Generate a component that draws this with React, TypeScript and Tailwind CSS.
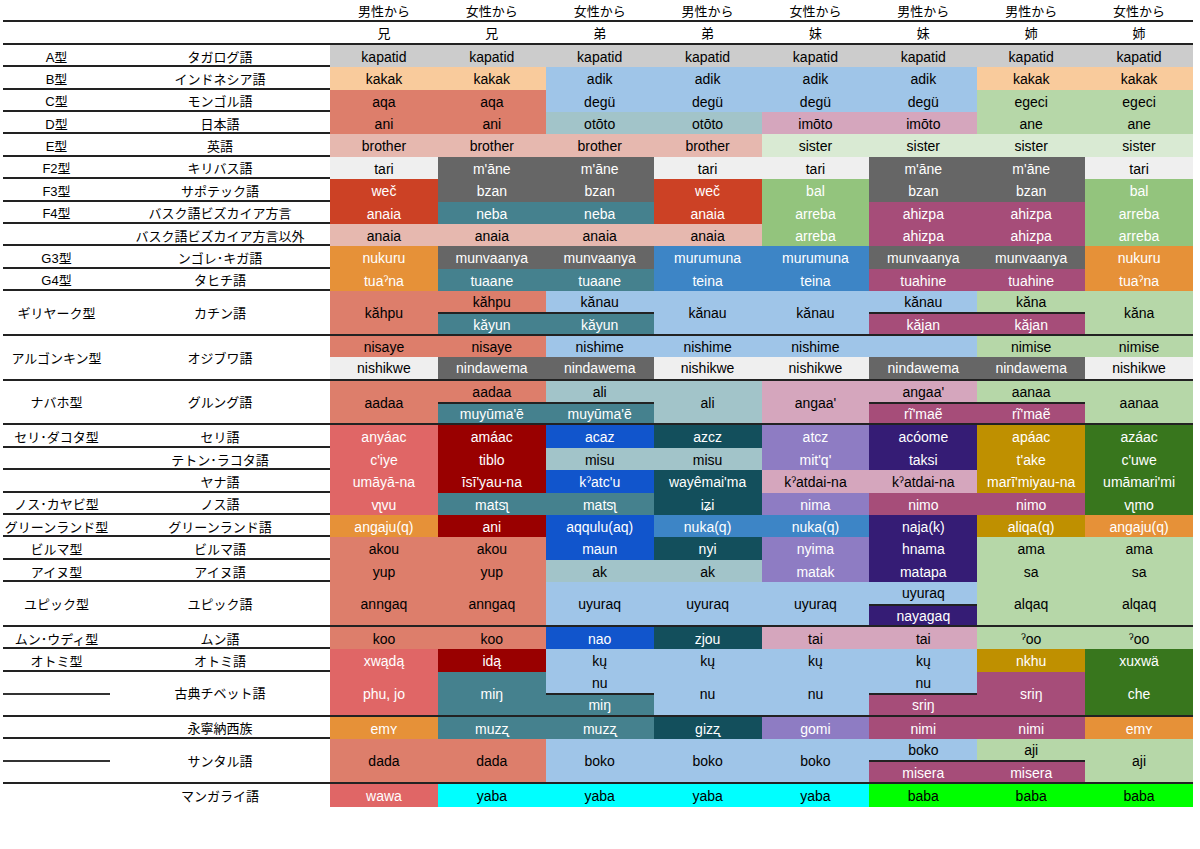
import React from "react";

const COLORS: Record<string, string> = {
  g: "bg-[#cccccc] text-black",
  pe: "bg-[#f9cb9c] text-black",
  lb: "bg-[#9fc5e8] text-black",
  sa: "bg-[#dd7e6b] text-black",
  lg: "bg-[#b6d7a8] text-black",
  tg: "bg-[#a2c4c9] text-black",
  pk: "bg-[#d5a6bd] text-black",
  br: "bg-[#e6b8af] text-black",
  si: "bg-[#d9ead3] text-black",
  wh: "bg-[#efefef] text-black",
  dg: "bg-[#666666] text-white",
  ro: "bg-[#cc4125] text-white",
  gr: "bg-[#93c47d] text-white",
  te: "bg-[#45818e] text-white",
  mg: "bg-[#a64d79] text-white",
  or: "bg-[#e69138] text-white",
  bl: "bg-[#3d85c6] text-white",
  rd: "bg-[#e06666] text-white",
  dr: "bg-[#990000] text-white",
  db: "bg-[#1155cc] text-white",
  dt: "bg-[#134f5c] text-white",
  pu: "bg-[#8e7cc3] text-white",
  dp: "bg-[#351c75] text-white",
  go: "bg-[#bf9000] text-white",
  dgr: "bg-[#38761d] text-white",
  cy: "bg-[#00ffff] text-black",
  li: "bg-[#00ff00] text-black",
};

const COL_START: Record<number, string> = {
  1: "col-start-3",
  2: "col-start-4",
  3: "col-start-5",
  4: "col-start-6",
  5: "col-start-7",
  6: "col-start-8",
  7: "col-start-9",
  8: "col-start-10",
};

const GRID = "grid grid-cols-[107px_220px_repeat(8,minmax(0,1fr))]";
const LINE = "border-b-2 border-[#222]";

type Single = { type?: string; lang: string; cells: [string, string][]; dash?: boolean };
type Cell = { t: string; k: string; c: number; r?: 1 | 2; rs?: 1 | 2; line?: boolean };
type Double = { type?: string; lang: string; cells: Cell[]; dash?: boolean };

const rep = (t: string, k: string, n: number) => Array.from({ length: n }, () => [t, k] as [string, string]);

const top: Single[] = [
  { type: "A型", lang: "タガログ語", cells: rep("kapatid", "g", 8) },
  { type: "B型", lang: "インドネシア語", cells: [...rep("kakak", "pe", 2), ...rep("adik", "lb", 4), ...rep("kakak", "pe", 2)] },
  { type: "C型", lang: "モンゴル語", cells: [...rep("aqa", "sa", 2), ...rep("degü", "lb", 4), ...rep("egeci", "lg", 2)] },
  { type: "D型", lang: "日本語", cells: [...rep("ani", "sa", 2), ...rep("otōto", "tg", 2), ...rep("imōto", "pk", 2), ...rep("ane", "lg", 2)] },
  { type: "E型", lang: "英語", cells: [...rep("brother", "br", 4), ...rep("sister", "si", 4)] },
  { type: "F2型", lang: "キリバス語", cells: [["tari", "wh"], ["m'āne", "dg"], ["m'āne", "dg"], ["tari", "wh"], ["tari", "wh"], ["m'āne", "dg"], ["m'āne", "dg"], ["tari", "wh"]] },
  { type: "F3型", lang: "サポテック語", cells: [["weč", "ro"], ["bzan", "dg"], ["bzan", "dg"], ["weč", "ro"], ["bal", "gr"], ["bzan", "dg"], ["bzan", "dg"], ["bal", "gr"]] },
  { type: "F4型", lang: "バスク語ビズカイア方言", cells: [["anaia", "ro"], ["neba", "te"], ["neba", "te"], ["anaia", "ro"], ["arreba", "gr"], ["ahizpa", "mg"], ["ahizpa", "mg"], ["arreba", "gr"]] },
  { lang: "バスク語ビズカイア方言以外", cells: [...rep("anaia", "br", 4), ["arreba", "gr"], ["ahizpa", "mg"], ["ahizpa", "mg"], ["arreba", "gr"]] },
  { type: "G3型", lang: "ンゴレ･キガ語", cells: [["nukuru", "or"], ["munvaanya", "dg"], ["munvaanya", "dg"], ["murumuna", "bl"], ["murumuna", "bl"], ["munvaanya", "dg"], ["munvaanya", "dg"], ["nukuru", "or"]] },
  { type: "G4型", lang: "タヒチ語", cells: [["tuaˀna", "or"], ["tuaane", "te"], ["tuaane", "te"], ["teina", "bl"], ["teina", "bl"], ["tuahine", "mg"], ["tuahine", "mg"], ["tuaˀna", "or"]] },
];

const gilyak: Double[] = [
  {
    type: "ギリヤーク型",
    lang: "カチン語",
    cells: [
      { t: "kăhpu", k: "sa", c: 1, rs: 2 },
      { t: "kăhpu", k: "sa", c: 2, r: 1 },
      { t: "kănau", k: "lb", c: 3, r: 1 },
      { t: "kăyun", k: "te", c: 2, r: 2, line: true },
      { t: "kăyun", k: "te", c: 3, r: 2, line: true },
      { t: "kănau", k: "lb", c: 4, rs: 2 },
      { t: "kănau", k: "lb", c: 5, rs: 2 },
      { t: "kănau", k: "lb", c: 6, r: 1 },
      { t: "kăna", k: "lg", c: 7, r: 1 },
      { t: "kăjan", k: "mg", c: 6, r: 2, line: true },
      { t: "kăjan", k: "mg", c: 7, r: 2, line: true },
      { t: "kăna", k: "lg", c: 8, rs: 2 },
    ],
  },
  {
    type: "アルゴンキン型",
    lang: "オジブワ語",
    cells: [
      { t: "nisaye", k: "sa", c: 1, r: 1 },
      { t: "nisaye", k: "sa", c: 2, r: 1 },
      { t: "nishime", k: "lb", c: 3, r: 1 },
      { t: "nishime", k: "lb", c: 4, r: 1 },
      { t: "nishime", k: "lb", c: 5, r: 1 },
      { t: "", k: "lb", c: 6, r: 1 },
      { t: "nimise", k: "lg", c: 7, r: 1 },
      { t: "nimise", k: "lg", c: 8, r: 1 },
      { t: "nishikwe", k: "wh", c: 1, r: 2 },
      { t: "nindawema", k: "dg", c: 2, r: 2 },
      { t: "nindawema", k: "dg", c: 3, r: 2 },
      { t: "nishikwe", k: "wh", c: 4, r: 2 },
      { t: "nishikwe", k: "wh", c: 5, r: 2 },
      { t: "nindawema", k: "dg", c: 6, r: 2 },
      { t: "nindawema", k: "dg", c: 7, r: 2 },
      { t: "nishikwe", k: "wh", c: 8, r: 2 },
    ],
  },
  {
    type: "ナバホ型",
    lang: "グルング語",
    cells: [
      { t: "aadaa", k: "sa", c: 1, rs: 2 },
      { t: "aadaa", k: "sa", c: 2, r: 1 },
      { t: "ali", k: "tg", c: 3, r: 1 },
      { t: "muyūma'ē", k: "te", c: 2, r: 2, line: true },
      { t: "muyūma'ē", k: "te", c: 3, r: 2, line: true },
      { t: "ali", k: "tg", c: 4, rs: 2 },
      { t: "angaa'", k: "pk", c: 5, rs: 2 },
      { t: "angaa'", k: "pk", c: 6, r: 1 },
      { t: "aanaa", k: "lg", c: 7, r: 1 },
      { t: "rĩ'maẽ", k: "mg", c: 6, r: 2, line: true },
      { t: "rĩ'maẽ", k: "mg", c: 7, r: 2, line: true },
      { t: "aanaa", k: "lg", c: 8, rs: 2 },
    ],
  },
];

const mid: Single[] = [
  { type: "セリ･ダコタ型", lang: "セリ語", cells: [["anyáac", "rd"], ["amáac", "dr"], ["acaz", "db"], ["azcz", "dt"], ["atcz", "pu"], ["acóome", "dp"], ["apáac", "go"], ["azáac", "dgr"]] },
  { lang: "テトン･ラコタ語", cells: [["c'iye", "rd"], ["tiblo", "dr"], ["misu", "tg"], ["misu", "tg"], ["mit'q'", "pu"], ["taksi", "dp"], ["t'ake", "go"], ["c'uwe", "dgr"]] },
  { lang: "ヤナ語", cells: [["umāyā-na", "rd"], ["īsī'yau-na", "dr"], ["kˀatc'u", "db"], ["wayêmai'ma", "dt"], ["kˀatdai-na", "pk"], ["kˀatdai-na", "pk"], ["marī'miyau-na", "go"], ["umāmari'mi", "dgr"]] },
  { type: "ノス･カヤビ型", lang: "ノス語", cells: [["vʅvu", "rd"], ["matsʅ", "te"], ["matsʅ", "te"], ["iʑi", "dt"], ["nima", "pu"], ["nimo", "mg"], ["nimo", "mg"], ["vʅmo", "dgr"]] },
  { type: "グリーンランド型", lang: "グリーンランド語", cells: [["angaju(q)", "or"], ["ani", "dr"], ["aqqulu(aq)", "db"], ["nuka(q)", "bl"], ["nuka(q)", "bl"], ["naja(k)", "dp"], ["aliqa(q)", "go"], ["angaju(q)", "or"]] },
  { type: "ビルマ型", lang: "ビルマ語", cells: [["akou", "sa"], ["akou", "sa"], ["maun", "db"], ["nyi", "dt"], ["nyima", "pu"], ["hnama", "dp"], ["ama", "lg"], ["ama", "lg"]] },
  { type: "アイヌ型", lang: "アイヌ語", cells: [["yup", "sa"], ["yup", "sa"], ["ak", "tg"], ["ak", "tg"], ["matak", "pu"], ["matapa", "dp"], ["sa", "lg"], ["sa", "lg"]] },
];

const yupik: Double = {
  type: "ユピック型",
  lang: "ユピック語",
  cells: [
    { t: "anngaq", k: "sa", c: 1, rs: 2 },
    { t: "anngaq", k: "sa", c: 2, rs: 2 },
    { t: "uyuraq", k: "lb", c: 3, rs: 2 },
    { t: "uyuraq", k: "lb", c: 4, rs: 2 },
    { t: "uyuraq", k: "lb", c: 5, rs: 2 },
    { t: "uyuraq", k: "lb", c: 6, r: 1 },
    { t: "nayagaq", k: "dp", c: 6, r: 2, line: true },
    { t: "alqaq", k: "lg", c: 7, rs: 2 },
    { t: "alqaq", k: "lg", c: 8, rs: 2 },
  ],
};

const mun: Single[] = [
  { type: "ムン･ウディ型", lang: "ムン語", cells: [["koo", "sa"], ["koo", "sa"], ["nao", "db"], ["zjou", "dt"], ["tai", "pk"], ["tai", "pk"], ["ˀoo", "lg"], ["ˀoo", "lg"]] },
  { type: "オトミ型", lang: "オトミ語", cells: [["xwądą", "rd"], ["idą", "dr"], ["kų", "lb"], ["kų", "lb"], ["kų", "lb"], ["kų", "lb"], ["nkhu", "go"], ["xuxwä", "dgr"]] },
];

const tibet: Double = {
  lang: "古典チベット語",
  dash: true,
  cells: [
    { t: "phu, jo", k: "rd", c: 1, rs: 2 },
    { t: "miŋ", k: "te", c: 2, rs: 2 },
    { t: "nu", k: "lb", c: 3, r: 1 },
    { t: "miŋ", k: "te", c: 3, r: 2, line: true },
    { t: "nu", k: "lb", c: 4, rs: 2 },
    { t: "nu", k: "lb", c: 5, rs: 2 },
    { t: "nu", k: "lb", c: 6, r: 1 },
    { t: "sriŋ", k: "mg", c: 6, r: 2, line: true },
    { t: "sriŋ", k: "mg", c: 7, rs: 2 },
    { t: "che", k: "dgr", c: 8, rs: 2 },
  ],
};

const naxi: Single = { lang: "永寧納西族", cells: [["emʏ", "or"], ["muzʐ", "te"], ["muzʐ", "te"], ["gizʐ", "dt"], ["gomi", "pu"], ["nimi", "mg"], ["nimi", "mg"], ["emʏ", "or"]] };

const santal: Double = {
  lang: "サンタル語",
  dash: true,
  cells: [
    { t: "dada", k: "sa", c: 1, rs: 2 },
    { t: "dada", k: "sa", c: 2, rs: 2 },
    { t: "boko", k: "lb", c: 3, rs: 2 },
    { t: "boko", k: "lb", c: 4, rs: 2 },
    { t: "boko", k: "lb", c: 5, rs: 2 },
    { t: "boko", k: "lb", c: 6, r: 1 },
    { t: "aji", k: "lg", c: 7, r: 1 },
    { t: "misera", k: "mg", c: 6, r: 2, line: true },
    { t: "misera", k: "mg", c: 7, r: 2, line: true },
    { t: "aji", k: "lg", c: 8, rs: 2 },
  ],
};

const manggarai: Single = { lang: "マンガライ語", cells: [["wawa", "rd"], ...rep("yaba", "cy", 4), ...rep("baba", "li", 3)] };

const TXT = "flex items-center justify-center pt-[2px]";

function SingleRow({ row, last }: { row: Single; last?: boolean }) {
  return (
    <div className={`${GRID} h-[22.4px] ${last ? "" : LINE}`}>
      <div className={`${TXT} text-[13px]`}>{row.type}</div>
      <div className={`${TXT} text-[13px]`}>{row.lang}</div>
      {row.cells.map(([t, k], i) => (
        <div key={i} className={`${TXT} text-[14px] ${COLORS[k]}`}>
          {t}
        </div>
      ))}
    </div>
  );
}

function DoubleRow({ row }: { row: Double }) {
  return (
    <div className={`${GRID} grid-rows-2 h-[44.8px] ${LINE}`}>
      <div className="col-start-1 row-start-1 row-span-2 flex items-center justify-center pt-[2px] text-[13px]">
        {row.dash ? <div className="h-[2px] w-[109px] bg-[#333]" /> : row.type}
      </div>
      <div className="col-start-2 row-start-1 row-span-2 flex items-center justify-center pt-[2px] text-[13px]">{row.lang}</div>
      {row.cells.map((c, i) => (
        <div
          key={i}
          className={[
            TXT,
            "text-[14px]",
            COL_START[c.c],
            c.rs === 2 ? "row-start-1 row-span-2" : c.r === 2 ? "row-start-2" : "row-start-1",
            c.line ? "border-t-2 border-[#222]" : "",
            COLORS[c.k],
          ].join(" ")}
        >
          {c.t}
        </div>
      ))}
    </div>
  );
}

const HEAD1 = ["男性から", "女性から", "女性から", "男性から", "女性から", "男性から", "男性から", "女性から"];
const HEAD2 = ["兄", "兄", "弟", "弟", "妹", "妹", "姉", "姉"];

export default function App() {
  return (
    <div className="w-[1200px] h-[849px] bg-white font-['Liberation_Sans','Noto_Sans_CJK_JP',sans-serif] text-black">
      <div className="ml-[3px] w-[1190px] flex flex-col">
        <div className={`${GRID} h-[22.4px] ${LINE}`}>
          <div />
          <div />
          {HEAD1.map((h, i) => (
            <div key={i} className={`${TXT} text-[13px]`}>{h}</div>
          ))}
        </div>
        <div className={`${GRID} h-[22.4px] ${LINE}`}>
          <div />
          <div />
          {HEAD2.map((h, i) => (
            <div key={i} className={`${TXT} text-[13px]`}>{h}</div>
          ))}
        </div>
        {top.map((r, i) => <SingleRow key={`t${i}`} row={r} />)}
        {gilyak.map((r, i) => <DoubleRow key={`g${i}`} row={r} />)}
        {mid.map((r, i) => <SingleRow key={`m${i}`} row={r} />)}
        <DoubleRow row={yupik} />
        {mun.map((r, i) => <SingleRow key={`u${i}`} row={r} />)}
        <DoubleRow row={tibet} />
        <SingleRow row={naxi} />
        <DoubleRow row={santal} />
        <SingleRow row={manggarai} last />
      </div>
    </div>
  );
}
